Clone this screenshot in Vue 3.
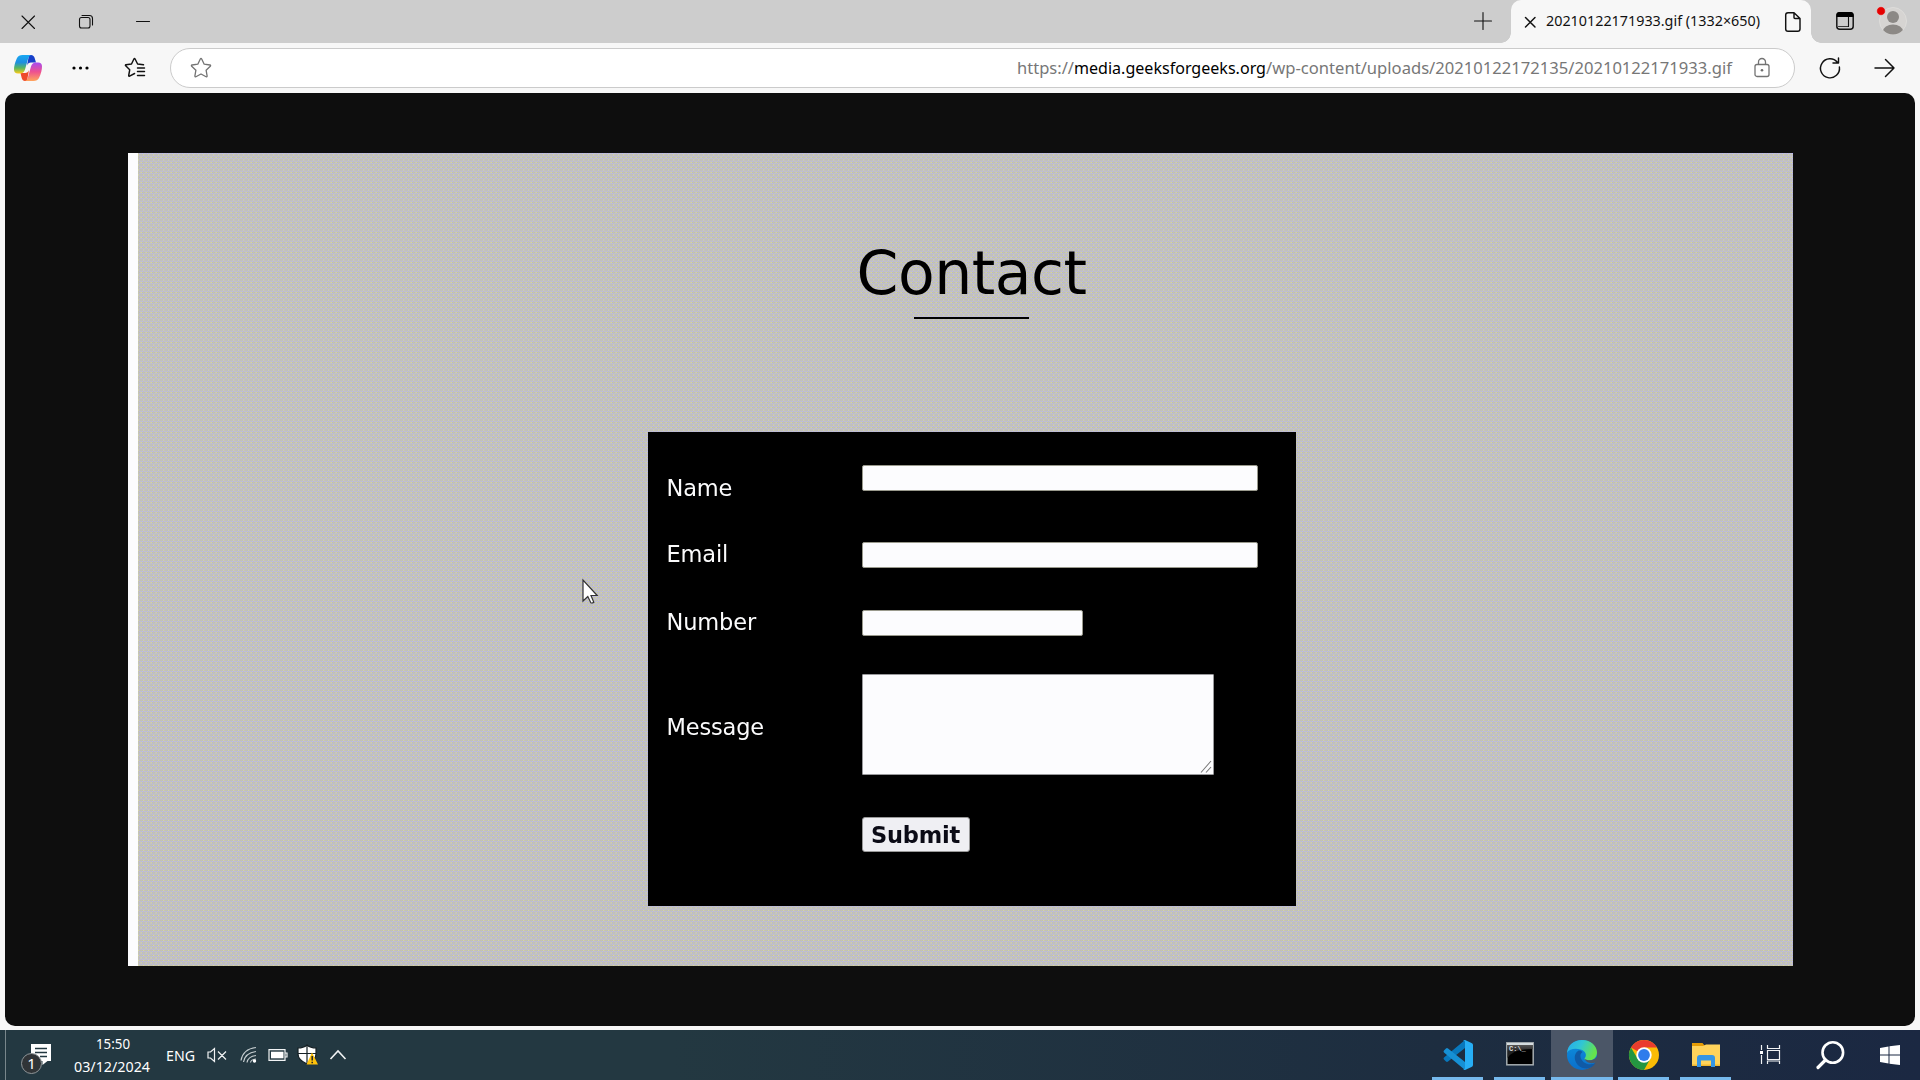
<script setup>
import { onMounted, ref } from 'vue'

// Ordered dither of a grey page, painted at its native 1324 x 650 size
const texture = ref(null)
const lavender = [184, 180, 252]
const olive = [196, 196, 180]
const yellow = [215, 215, 168]
const grey = [193, 194, 166]
const tile = [
  [olive, lavender, olive, lavender],
  [yellow, grey, olive, grey],
  [olive, lavender, olive, lavender],
  [olive, grey, yellow, grey],
]

onMounted(() => {
  const { width, height } = texture.value
  const context = texture.value.getContext('2d')
  const image = context.createImageData(width, height)
  for (let y = 0; y < height; y++) {
    for (let x = 0; x < width; x++) {
      image.data.set([...tile[y % 4][x % 4], 255], (y * width + x) * 4)
    }
  }
  context.putImageData(image, 0, 0)
})
</script>

<template>
  <div class="screen">
    <header class="titlebar">
      <div class="winbtn"><svg width="16" height="16" viewBox="0 0 16 16"><path d="M2 2 14.500 14.500M14.500 2 2 14.500" class="ink" /></svg></div>
      <div class="winbtn"><svg width="16" height="16" viewBox="0 0 16 16"><rect x="1.500" y="3.500" width="10.500" height="10.500" rx="2" class="ink" /><path d="M4 1.500h7.500a3 3 0 0 1 3 3V11" class="ink" /></svg></div>
      <div class="winbtn"><svg width="16" height="16" viewBox="0 0 16 16"><path d="M1.500 7.500h13" class="ink" /></svg></div>
      <div class="plus"><svg width="20" height="20" viewBox="0 0 20 20"><path d="M10 1.500v17M1.500 10h17" class="ink" /></svg></div>
      <div class="tab">
        <svg class="tabclose" width="14" height="14" viewBox="0 0 14 14"><path d="m2.500 2.500 9.500 9.500M12 2.500 2.500 12" class="ink bold" /></svg>
        <svg class="tabtitle" width="220" height="24"><text x="0" y="16" textLength="214" lengthAdjust="spacingAndGlyphs">20210122171933.gif (1332×650)</text></svg>
        <svg width="18" height="22" viewBox="0 0 18 22"><path d="M4 1.700h6L16 7.500V18a2.300 2.300 0 0 1-2.300 2.300H4A2.300 2.300 0 0 1 1.700 18V4A2.300 2.300 0 0 1 4 1.700zM10 2v4.500a1 1 0 0 0 1 1h5" class="ink bold" /></svg>
      </div>
      <svg class="windowicon" width="20" height="20" viewBox="0 0 20 20"><rect x="1.800" y="1.800" width="16.400" height="16.400" rx="3" class="ink bold" /><path d="M1.500 6V4a3 3 0 0 1 3-3h11a3 3 0 0 1 3 3v2z" /><path d="M13.500 6v9.500" class="ink" /><path d="M3.500 15.500h10" class="ink thin" /></svg>
      <svg class="avatar" width="36" height="32" viewBox="0 0 36 32"><defs><clipPath id="face"><circle cx="20" cy="16" r="13.500" /></clipPath></defs><circle cx="20" cy="16" r="13.500" fill="#d6d4d2" stroke="#dedddb" /><g clip-path="url(#face)" fill="#8c8986"><circle cx="20" cy="12" r="6" /><ellipse cx="20" cy="26.500" rx="10" ry="7" /></g><circle cx="8" cy="6" r="4.300" fill="#e60000" stroke="#ddd" stroke-width=".5" /></svg>
    </header>

    <nav class="toolbar">
      <svg class="copilot" width="28" height="26" viewBox="0 0 28 26">
        <defs>
          <linearGradient id="ca" x1="0" y1="0" x2="0" y2="1"><stop offset="0" stop-color="#18a8f2" /><stop offset=".4" stop-color="#1e8fe0" /><stop offset=".7" stop-color="#58b75f" /><stop offset="1" stop-color="#ffcb18" /></linearGradient>
          <linearGradient id="cb" x1="0" y1="0" x2="0" y2="1"><stop offset="0" stop-color="#a64bf0" /><stop offset=".5" stop-color="#ee5090" /><stop offset="1" stop-color="#ffa55c" /></linearGradient>
        </defs>
        <path d="M15 0h2q3 0 3.800 3.500l1.200 4h-5q-3 0-4 3z" fill="#173fc9" />
        <path d="M13 26h-2q-2.500 0-3.300-3L6.500 18H11q3 0 4-3z" fill="#ee4a2c" />
        <path d="M8.500 0H17q-2 .5-3 4l-3 10.500q-1.200 4-5 4H4q-4 0-4-4 0-5 3-11.500Q4.500 0 8.500 0z" fill="url(#ca)" />
        <path d="M19.500 26H11q2-.5 3-4l3-10.500q1.200-4 5-4h2q4 0 4 4 0 5-3 11.500-1.500 3-5.500 3z" fill="url(#cb)" />
      </svg>
      <svg class="dots" width="18" height="6" viewBox="0 0 18 6"><circle cx="2" cy="3" r="1.600" /><circle cx="8.500" cy="3" r="1.600" /><circle cx="15" cy="3" r="1.600" /></svg>
      <svg class="favs" width="22" height="22" viewBox="0 0 22 22"><path d="M19.500 7.800 13.600 7 11.100 2Q10.500 1 9.900 2L7.500 7l-5.500.8q-1 .3-.3 1l4 4-1 5.700q0 1 .9.600l5-2.600M13.500 11h7M13.500 14.500h7M13.500 18.500h7" class="ink bold" /></svg>
      <div class="address">
        <svg width="22" height="22" viewBox="0 0 22 22"><path d="M10.300 2q.7-1.200 1.400 0l2.500 5.200 5.700.8q1.200.3.400 1.200l-4.200 4 1 5.700q0 1.200-1 .8L11 17l-5.100 2.700q-1 .4-1-.8l1-5.700-4.200-4q-.8-.9.400-1.200l5.700-.8z" class="muted" /></svg>
        <svg class="url" width="720" height="30"><text x="2" y="20.500" textLength="57" lengthAdjust="spacingAndGlyphs">https://</text><text x="59" y="20.500" textLength="192" lengthAdjust="spacingAndGlyphs" class="host">media.geeksforgeeks.org</text><text x="251" y="20.500" textLength="466" lengthAdjust="spacingAndGlyphs">/wp-content/uploads/20210122172135/20210122171933.gif</text></svg>
        <svg class="lock" width="18" height="22" viewBox="0 0 18 22"><rect x="2" y="7.500" width="14" height="12" rx="2" class="muted" /><path d="M5.500 7.500V5a3.500 3.500 0 0 1 7 0v2.500" class="muted" /><circle cx="9" cy="13.300" r="1.300" fill="#6d6d6d" /></svg>
      </div>
      <svg class="reload" width="22" height="22" viewBox="0 0 22 22"><path d="M18.500 5.500A9.500 9.500 0 1 0 20.400 10M19.500 1v5h-5.500" class="ink bold" /></svg>
      <svg class="forward" width="22" height="20" viewBox="0 0 22 20"><path d="M1 10h19M11.500 1.500 20 10l-8.500 8.500" class="ink bold" /></svg>
    </nav>

    <section class="stage">
      <main class="viewer">
        <div class="picture">
          <canvas ref="texture" class="texture" width="1324" height="650"></canvas>
          <div class="contact">
            <h1>Contact</h1>
            <div class="rule"></div>
            <form class="card" @submit.prevent>
              <div class="row name"><label>Name</label><input type="text" /></div>
              <div class="row email"><label>Email</label><input type="text" /></div>
              <div class="row number"><label>Number</label><input type="text" /></div>
              <div class="row message"><label>Message</label><div class="area"><svg width="13" height="13" viewBox="0 0 13 13"><path d="M1 11.500 11 0M6 11.500l5-5.500" stroke="#777" fill="none" stroke-width="1.100" /></svg></div></div>
              <button type="submit">Submit</button>
            </form>
          </div>
          <svg class="cursor" width="18" height="26" viewBox="0 0 18 26"><path d="M1 1v21l4.800-4.500 3 6.200q1.200.8 3-.5L9 16.500h6.200z" fill="#fff" stroke="#333" stroke-width="1.200" /></svg>
        </div>
      </main>
    </section>

    <footer class="taskbar">
      <div class="peek"></div>
      <svg class="notice" width="32" height="34" viewBox="0 0 32 34"><path d="M10 3h20v17h-3.500l-5 4v-4H10z" fill="#fff" /><path d="M14 7.500h12M14 11.500h12M19 15.500h7" stroke="#233841" stroke-width="1.300" /><circle cx="10.500" cy="22.500" r="10" fill="#303437" stroke="#909699" /><text x="10.500" y="28" text-anchor="middle" class="count">1</text></svg>
      <svg class="clock" width="84" height="50"><text x="26" y="19" textLength="34" lengthAdjust="spacingAndGlyphs">15:50</text><text x="4" y="41.500" textLength="76" lengthAdjust="spacingAndGlyphs">03/12/2024</text></svg>
      <svg class="lang" width="30" height="24"><text x="0" y="16" textLength="29" lengthAdjust="spacingAndGlyphs">ENG</text></svg>
      <svg class="sound" width="20" height="18" viewBox="0 0 20 18"><path d="M1 6v6h2.500L7.500 15.500v-13L3.500 6zM11 5.500l8 8M19 5.500l-8 8" class="light" /></svg>
      <svg class="wifi" width="18" height="18" viewBox="0 0 18 18"><path d="M1 14.500Q3 3 16 1.500M3.500 16Q5 7 16 5.500M7 16.500q1-6 9-7M10.500 16.500q.5-3 5.500-3.500" class="light dim" /><circle cx="14.500" cy="15" r="1.700" fill="#fff" /></svg>
      <svg class="battery" width="20" height="12" viewBox="0 0 20 12"><path d="M1 .7h16v10.600H1zM17.500 4h1.500v4h-1.500" class="light" /><path d="M3 2.700h12.500v6.600H3z" fill="#fff" /></svg>
      <svg class="shield" width="22" height="22" viewBox="0 0 22 22"><path d="M10 1q3.500 3 9 3v6q0 6-9 10-9-4-9-10V4q5.500 0 9-3z" fill="#fff" stroke="#152025" stroke-width="1.200" /><path d="M10 1v19M1 9.500h18" stroke="#152025" stroke-width="1.200" /><path d="m15 8.500 6 12H9.500z" fill="#ffc20a" /><path d="M15.200 12v4.500M15.200 17.800v1.500" stroke="#222" stroke-width="1.500" /></svg>
      <svg class="chevron" width="18" height="12" viewBox="0 0 18 12"><path d="m1.500 10 7.500-8 7.500 8" class="light thick" /></svg>

      <div class="apps">
        <div class="app open"><svg width="32" height="32" viewBox="0 0 32 32"><path d="M23 1v8L6 22.500q-1 .8-2 0l-2-2q-1-1 0-2z" fill="#0878bd" /><path d="M2 11.500l2-2q1-.8 2 0L23 23v8L2 13.500q-1-1 0-2z" fill="#1690d5" /><path d="m23 1 6.500 3q1.500.7 1.500 2v20q0 1.300-1.500 2L23 31q-1 .3-2-1 2 1 2-1V3q0-2-2-1 1-1.300 2-1z" fill="#27aef5" /></svg></div>
        <div class="app open"><svg class="terminal" width="28" height="24" viewBox="0 0 28 24"><defs><linearGradient id="term" x2="0" y2="1"><stop stop-color="#555" /><stop offset=".5" stop-color="#222" /></linearGradient></defs><rect x=".8" y=".8" width="26.400" height="22" fill="#000" stroke="#a5adb0" stroke-width="1.500" /><path d="M1.500 3h25v4Q7 7 1.500 16z" fill="url(#term)" /><path d="M1 1h26v2H1z" fill="#d4dcdf" /><text x="3" y="9" class="prompt">C:\_</text></svg></div>
        <div class="app open active"><svg width="32" height="32" viewBox="0 0 32 32"><defs><linearGradient id="ea" x1="0" y1="0" x2="1" y2=".35"><stop stop-color="#25a9ef" /><stop offset=".5" stop-color="#31c6d4" /><stop offset="1" stop-color="#65e34d" /></linearGradient><linearGradient id="eb" x2="0" y2="1"><stop stop-color="#0d91de" /><stop offset="1" stop-color="#0b6fcb" /></linearGradient></defs><circle cx="16" cy="16" r="15" fill="url(#eb)" /><path d="M1 14C1.500 6 8 1 16 1c9 0 15 6 15 12.500 0 5-4 8-8 8-3 0-5-1-4.500-2 3-3 1-8-4-9C9 9 3 10 1 14z" fill="url(#ea)" /><path d="M12 12C6 16 9 27 17 29c6 1.500 10-1 12.500-5-7 3.500-14-.500-15-6-.500-3 1-4 2-5-1-1-3-2-4.500-1z" fill="#105aa6" /><path d="M32 15.500c-1.500 6.500-11 7-13.500 4 1.500 4.500 6 5.500 11 4l2.500-1z" fill="#4b5667" /></svg></div>
        <div class="app open"><svg width="32" height="32" viewBox="0 0 32 32"><circle cx="16" cy="16" r="15" fill="#fbbc05" /><path d="M16 16 3 8.500a15 15 0 0 1 26 0H16z" fill="#ea3c2e" /><path d="M3 8.500A15 15 0 0 0 16 31l6.500-11.500L16 16l-6.500 3.500z" fill="#249641" /><circle cx="16" cy="16" r="7.700" fill="#fff" /><circle cx="16" cy="16" r="5.900" fill="#2f7cec" /></svg></div>
        <div class="app open"><svg width="30" height="26" viewBox="0 0 30 26"><path d="M1 1h10.500l2.500 3H1z" fill="#e59c05" /><path d="M1 4h11l3-1.500h14V24H1z" fill="#ffd35b" /><path d="M1 22.500h28V24H1z" fill="#f0b72f" /><path d="M6 25V16q0-3 3-3h12q3 0 3 3v9h-4v-6.500H10V25z" fill="#3595e5" /></svg></div>
        <div class="tool first"><svg width="22" height="22" viewBox="0 0 22 22"><path d="M2.500 1v5M2.500 11v9M8.500 1v3.500h12V1M8.500 6.500h12v9h-12zM8.500 20v-3h12v3" class="light" /><path d="M1 7h3v3H1z" fill="#fff" /></svg></div>
        <div class="tool"><svg width="30" height="30" viewBox="0 0 30 30"><circle cx="17.800" cy="12.500" r="10.300" fill="none" stroke="#fff" stroke-width="2.600" /><path d="M10.500 20 3 27.500" stroke="#fff" stroke-width="3.200" stroke-linecap="round" /></svg></div>
        <div class="tool"><svg width="22" height="22" viewBox="0 0 22 22"><path d="M1 4 9.500 2.500v8H1zM10.500 2.300 21 1v9.500H10.500zM1 11.500h8.500v8L1 18zM10.500 11.500H21V21l-10.500-1.300z" fill="#fff" /></svg></div>
      </div>
    </footer>
  </div>
</template>

<style>
body { margin: 0; overflow: hidden; }
</style>

<style scoped>
.screen { width: 1920px; height: 1080px; display: flex; flex-direction: column; overflow: hidden; background: #f7f7f7; font-family: "Noto Sans", "Open Sans", sans-serif; }
svg { display: block; flex: none; overflow: visible; }
.ink { fill: none; stroke: #111; stroke-width: 1.1; stroke-linecap: round; stroke-linejoin: round; }
.ink.bold { stroke-width: 1.45; }
.ink.thin { stroke-width: .8; }
.muted { fill: none; stroke: #737373; stroke-width: 1.3; stroke-linejoin: round; }
.light { fill: none; stroke: #f1f3f4; stroke-width: 1.2; }
.light.dim { stroke: #c5cdd0; }
.light.thick { stroke-width: 1.6; }

.titlebar { height: 43px; flex: none; display: flex; align-items: center; background: #cdcdcd; }
.winbtn { width: 57.5px; height: 42px; display: flex; align-items: center; justify-content: center; position: relative; left: -.5px; }
.plus { flex: none; margin: 0 18px 1px 1300.5px; }
.tab { position: relative; width: 300px; height: 43px; box-sizing: border-box; display: flex; align-items: center; padding-left: 12px; border-radius: 10px 10px 0 0; background: #f7f7f7; }
.tab::before, .tab::after { content: ""; position: absolute; bottom: 0; width: 10px; height: 10px; }
.tab::before { left: -10px; background: radial-gradient(circle at 0 0, transparent 9.5px, #f7f7f7 10px); }
.tab::after { right: -10px; background: radial-gradient(circle at 100% 0, transparent 9.5px, #f7f7f7 10px); }
.tabtitle { margin: 0 18px 0 9px; }
.tabtitle text { font-size: 14.5px; fill: #111; }
.windowicon { margin-left: 24px; margin-bottom: 1px; }
.avatar { margin-left: 18px; margin-top: -1px; }

.toolbar { height: 50px; flex: none; display: flex; align-items: center; background: #f7f7f7; }
.copilot { margin-left: 14px; }
.dots { margin-left: 29.5px; margin-bottom: 1px; }
.favs { margin: 0 24px 0 34px; }
.address { width: 1625px; height: 40px; box-sizing: border-box; display: flex; align-items: center; margin-right: 24px; padding-left: 19px; border: 1px solid #cbcbcb; border-radius: 20px; background: #fff; }
.address .url { margin-left: 803.5px; }
.url text { font-size: 17px; fill: #777; }
.url .host { fill: #000; }
.lock { margin-left: 18px; }
.forward { margin-left: 33.5px; margin-bottom: 1px; }

.stage { height: 937px; flex: none; box-sizing: border-box; padding: 0 5px 4px; background: #f7f7f7; }
.viewer { height: 933px; box-sizing: border-box; padding: 60px 0 0 123px; border-radius: 10px; background: #0e0e0e; }
.picture { position: relative; width: 1665px; height: 813px; box-sizing: border-box; background: #fcfcfe; }
.texture { position: absolute; left: 10px; top: 0; width: 1655px; height: 813px; }
.contact { position: relative; display: flex; flex-direction: column; align-items: center; width: 1665px; box-sizing: border-box; padding-top: 85px; padding-left: 22px; }
h1 { margin: 0; height: 79px; line-height: 70px; font-family: "DejaVu Sans", sans-serif; font-weight: 400; font-size: 60px; letter-spacing: -0.5px; color: #000; }
.rule { width: 115px; height: 2px; background: #000; }
.card { width: 648px; height: 474px; box-sizing: border-box; margin: 113px 0 0; padding: 32.5px 0 0 18px; background: #000; font-family: "DejaVu Sans", sans-serif; }
.row { display: flex; align-items: flex-start; color: #fbfbfc; font-size: 22.5px; }
label { width: 195px; padding-left: 1px; line-height: 26px; letter-spacing: -.15px; }
input { width: 396px; height: 26px; box-sizing: border-box; margin: 0; padding: 0; border: 1px solid #99998c; border-radius: 2px; background: #fcfcfe; }
.name { height: 77.5px; }
.name label { padding-top: 10.5px; }
.email { height: 67.5px; }
.email label { margin-top: -1px; }
.number { height: 64px; }
.number label { margin-top: -.5px; }
.number input { width: 221px; }
.message { height: 143.5px; }
.message label { padding-top: 40.5px; }
.area { width: 352px; height: 101px; box-sizing: border-box; display: flex; align-items: flex-end; justify-content: flex-end; border: 1px solid #99999c; border-radius: 1px; background: #fcfcfe; }
button { display: block; width: 108px; height: 35px; margin-left: 196px; padding: 1px 0 0; border: 1px solid #999; border-radius: 3px; background: #efeff3; color: #0b0b16; font: 700 22.5px/30px "DejaVu Sans", sans-serif; letter-spacing: -.2px; }
.cursor { position: absolute; left: 454px; top: 426px; }

.taskbar { height: 50px; flex: none; display: flex; align-items: center; background: linear-gradient(90deg, #233841 0, #233841 35%, #1d2d40 75%, #1b2842 100%); color: #fff; }
.peek { width: 5px; height: 50px; border-right: 1px solid #78868b; }
.notice { margin: 6px 0 0 15px; }
.count { font-size: 15px; fill: #fff; }
.clock { margin-left: 17px; }
.clock text, .lang text { font-size: 14.5px; fill: #fff; }
.lang { margin: 4px 0 0 12px; }
.sound { margin-left: 11px; }
.wifi { margin-left: 13px; }
.battery { margin-left: 10px; }
.shield { margin: 0 0 0 9px; }
.chevron { margin-left: 10px; }
.apps { display: flex; margin-left: auto; }
.app { width: 62px; height: 50px; box-sizing: border-box; position: relative; display: flex; align-items: center; justify-content: center; }
.terminal { margin: 0 1px 2px 0; }
.open::after { content: ""; position: absolute; left: 5px; right: 6px; bottom: 0; height: 3px; background: #76b9ed; }
.active { background: #4b5667; }
.active::after { left: 0; right: 0; }
.tool { width: 60px; height: 50px; display: flex; align-items: center; justify-content: center; }
.first { margin-left: 3px; }
.prompt { font: 700 7px "Liberation Mono", monospace; fill: #ddd; }
</style>
